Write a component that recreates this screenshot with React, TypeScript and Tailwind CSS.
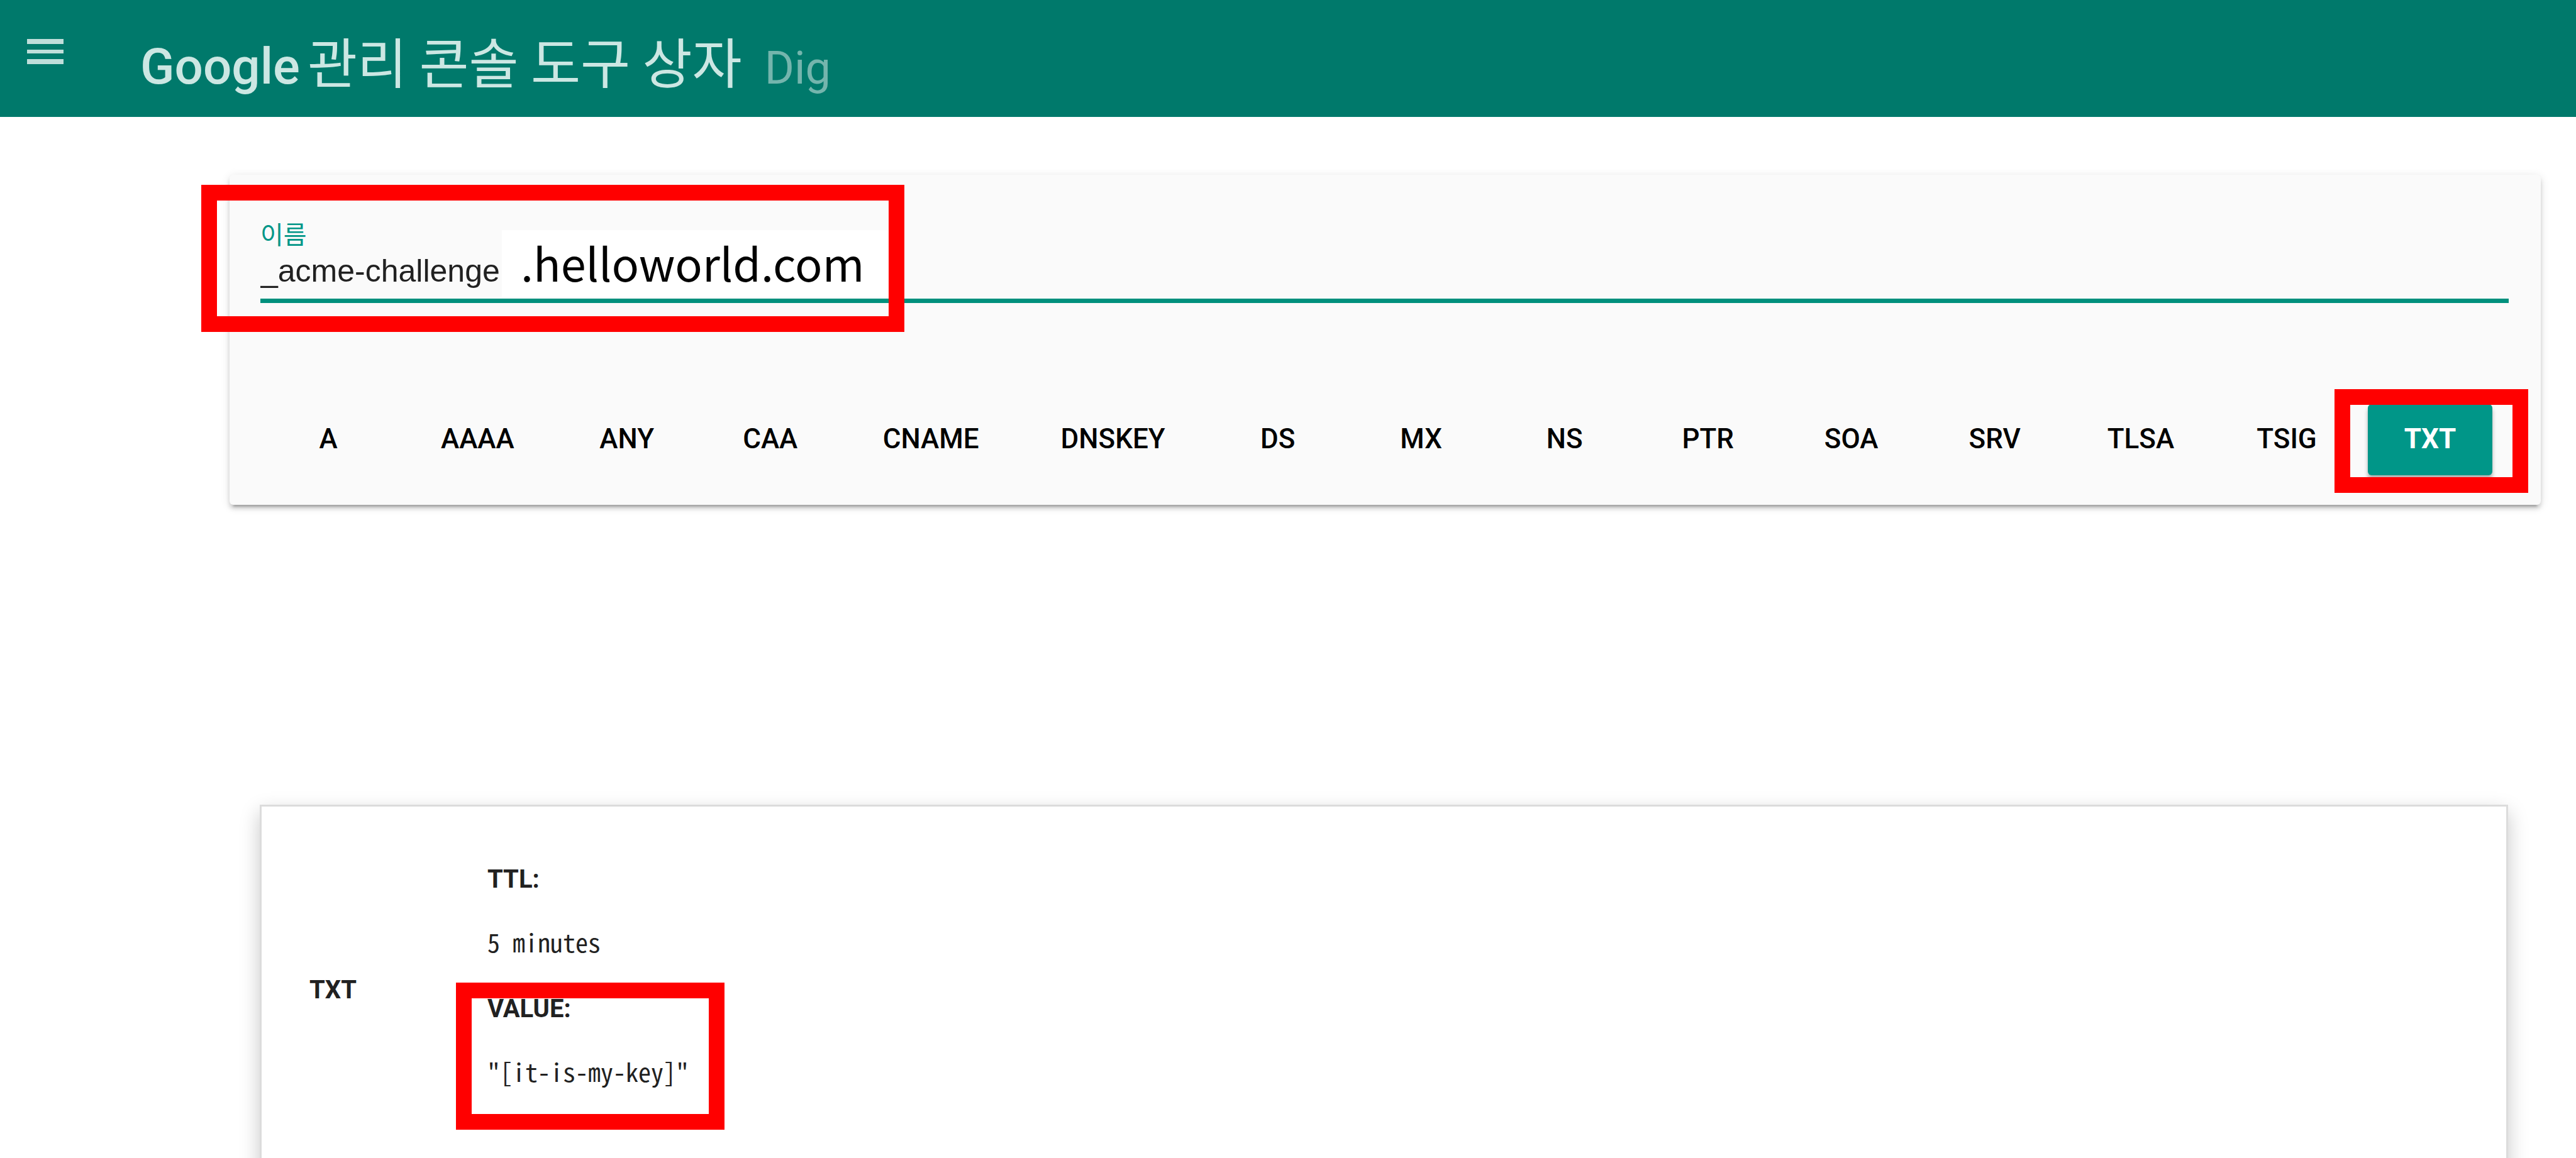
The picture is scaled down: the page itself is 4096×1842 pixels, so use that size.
import React, { useState } from "react";

const RECORD_TYPES = [
  "A", "AAAA", "ANY", "CAA", "CNAME", "DNSKEY", "DS", "MX",
  "NS", "PTR", "SOA", "SRV", "TLSA", "TSIG", "TXT",
];

const FRAME = "pointer-events-none absolute border-[25px] border-[#ff0000]";

function Header() {
  return (
    <header className="flex h-[186px] items-start bg-[#00796b] pl-[43px]">
      <button type="button" aria-label="메뉴" className="mt-[62px] mr-[122px]">
        <svg width="58" height="40" viewBox="0 0 58 40" fill="#bfdeda">
          <rect y="0" width="58" height="8" />
          <rect y="17" width="58" height="6" />
          <rect y="32" width="58" height="8" />
        </svg>
      </button>
      <div className="mt-[40px] flex items-baseline whitespace-nowrap leading-[112px]">
        <h1 className="flex items-baseline gap-3 font-['Roboto','Noto_Sans_CJK_KR',sans-serif] text-[#cce7e3]">
          <span className="text-[80px] font-medium">Google</span>
          <span className="font-['Noto_Sans_CJK_KR',sans-serif] text-[86px] font-normal">관리 콘솔 도구 상자</span>
        </h1>
        <span className="ml-[36px] font-['Roboto',sans-serif] text-[72px] text-[#74b5ad]">Dig</span>
      </div>
    </header>
  );
}

function NameField() {
  const [name, setName] = useState("_acme-challenge.");
  return (
    <div className="relative ml-[49px] mr-[51px]">
      <label
        htmlFor="domain"
        className="block font-['Noto_Sans_CJK_KR',sans-serif] text-[40px] leading-[48px] text-[#009688]"
      >
        이름
      </label>
      <input
        id="domain"
        type="text"
        value={name}
        onChange={(e) => setName(e.target.value)}
        className="block h-[87px] w-full border-b-[7px] border-[#00907d] pb-2 font-['Liberation_Sans',sans-serif] text-[50px] text-[#212121] outline-none"
      />
      <span className="absolute top-[19px] left-[384px] h-[106px] w-[616px] bg-white pl-[30px] font-['Noto_Sans_CJK_KR',sans-serif] text-[72px] leading-[102px] text-black">
        .helloworld.com
      </span>
      <div className={`${FRAME} -top-[53px] -left-[94px] h-[234px] w-[1118px]`} />
    </div>
  );
}

function TypeButtons() {
  const [active, setActive] = useState("TXT");
  return (
    <div className="mt-[161px] flex gap-[30px] px-[58px]">
      {RECORD_TYPES.map((type) => (
        <div key={type} className="relative">
          <button
            type="button"
            onClick={() => setActive(type)}
            className={
              type === active
                ? "h-[113px] min-w-[198px] rounded-md bg-[#009688] px-[50px] pb-1 font-['Roboto',sans-serif] text-[44px] font-bold text-white shadow-[0_6px_6px_rgba(0,0,0,0.3)]"
                : "h-[113px] min-w-[198px] rounded-md px-[50px] pb-1 font-['Roboto',sans-serif] text-[44px] font-medium text-black"
            }
          >
            {type}
          </button>
          {type === "TXT" && <div className={`${FRAME} -top-[24px] -right-[57px] -bottom-[28px] -left-[53px]`} />}
        </div>
      ))}
    </div>
  );
}

function Result() {
  return (
    <section className="mr-[108px] -mb-12 ml-[413px] mt-[477px] flex-1 border-[3px] border-[#dcdcdc] bg-white pt-[64px] shadow-[0_12px_30px_rgba(0,0,0,0.22)]">
      <table className="font-['Roboto',sans-serif] text-[40px] text-[#212121]">
        <tbody>
          <tr>
            <th scope="row" className="w-[359px] pl-[76px] text-left align-middle font-bold">TXT</th>
            <td className="relative pb-11">
              <dl className="leading-[103px]">
                <dt className="font-bold">TTL:</dt>
                <dd className="h-[103px] font-['Noto_Sans_Mono_CJK_KR','Liberation_Mono',monospace] leading-[97px] font-light">5 minutes</dd>
                <dt className="font-bold">VALUE:</dt>
                <dd className="h-[103px] font-['Noto_Sans_Mono_CJK_KR','Liberation_Mono',monospace] leading-[97px] font-light">"[it-is-my-key]"</dd>
              </dl>
              <div className={`${FRAME} top-[216px] -left-[50px] h-[234px] w-[427px]`} />
            </td>
          </tr>
        </tbody>
      </table>
    </section>
  );
}

export default function App() {
  return (
    <div className="flex min-h-screen flex-col overflow-hidden bg-white">
      <Header />
      <main className="flex flex-1 flex-col">
        <section className="mt-[92px] mr-[56px] ml-[365px] rounded-md bg-[#fafafa] pt-[69px] pb-[47px] shadow-[0_9px_3px_-6px_rgba(0,0,0,0.2),0_6px_6px_rgba(0,0,0,0.14),0_3px_15px_rgba(0,0,0,0.12)]">
          <NameField />
          <TypeButtons />
        </section>
        <Result />
      </main>
    </div>
  );
}
